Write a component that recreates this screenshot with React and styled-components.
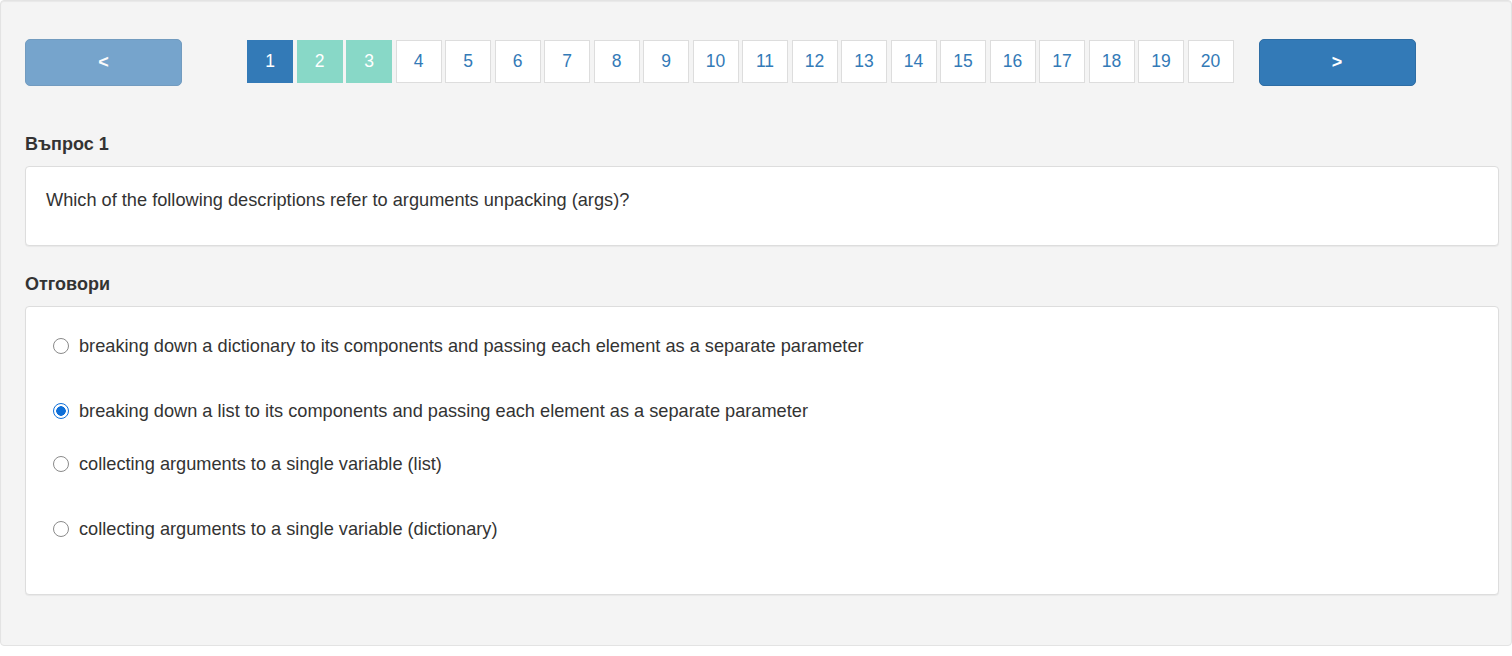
import React, { useState } from 'react';
import styled, { createGlobalStyle } from 'styled-components';

const GlobalStyle = createGlobalStyle`
  html, body {
    margin: 0;
    padding: 0;
    background: #fff;
  }
  body {
    font-family: 'Liberation Sans', Arial, sans-serif;
    color: #333;
  }
`;

const pages = Array.from({ length: 20 }, (_, i) => i + 1);

const answers = [
  { text: 'breaking down a dictionary to its components and passing each element as a separate parameter', space: 29 },
  { text: 'breaking down a list to its components and passing each element as a separate parameter', space: 45 },
  { text: 'collecting arguments to a single variable (list)', space: 33 },
  { text: 'collecting arguments to a single variable (dictionary)', space: 45 },
];

const App = () => {
  const [selected, setSelected] = useState(1);
  const current = 1;
  const visited = [2, 3];

  return (
    <>
      <GlobalStyle />
      <Well>
        <NavRow>
          <NavButton disabled>&lt;</NavButton>
          <Pager>
            {pages.map((p) => (
              <PageBox
                key={p}
                $state={p === current ? 'active' : visited.includes(p) ? 'visited' : 'default'}
              >
                {p}
              </PageBox>
            ))}
          </Pager>
          <NavButton>&gt;</NavButton>
        </NavRow>

        <Heading $top={48}>Въпрос 1</Heading>
        <QuestionCard>
          Which of the following descriptions refer to arguments unpacking (args)?
        </QuestionCard>

        <Heading $top={28}>Отговори</Heading>
        <AnswerCard>
          {answers.map((a, i) => (
            <Option key={i} $space={a.space}>
              <Radio
                type="radio"
                name="answer"
                checked={selected === i}
                onChange={() => setSelected(i)}
              />
              <span>{a.text}</span>
            </Option>
          ))}
        </AnswerCard>
      </Well>
    </>
  );
};

const Well = styled.div`
  box-sizing: border-box;
  width: 1512px;
  height: 646px;
  padding: 38px 12px 0 24px;
  background: #f4f4f4;
  border: 1px solid #e3e3e3;
  border-radius: 4px;
  box-shadow: inset 0 1px 1px rgba(0, 0, 0, 0.05);
`;

const NavRow = styled.div`
  display: flex;
  align-items: flex-start;
`;

const NavButton = styled.button`
  width: 157px;
  height: 47px;
  border: 1px solid #2e6da4;
  border-radius: 5px;
  background: #337ab7;
  color: #fff;
  font-family: 'Liberation Sans', Arial, sans-serif;
  font-size: 18px;
  font-weight: bold;
  cursor: pointer;
  &:disabled {
    opacity: 0.65;
    cursor: not-allowed;
  }
`;

const Pager = styled.div`
  display: flex;
  gap: 3.5px;
  margin: 1px 25px 0 65px;
`;

const pageColors = {
  active: { bg: '#337ab7', fg: '#fff', border: '#337ab7' },
  visited: { bg: '#88d8c7', fg: '#fff', border: '#88d8c7' },
  default: { bg: '#fff', fg: '#337ab7', border: '#dddddd' },
};

const PageBox = styled.div`
  box-sizing: border-box;
  width: 46px;
  height: 43px;
  display: flex;
  align-items: center;
  justify-content: center;
  font-size: 17.5px;
  background: ${(p) => pageColors[p.$state].bg};
  color: ${(p) => pageColors[p.$state].fg};
  border: 1px solid ${(p) => pageColors[p.$state].border};
  cursor: pointer;
`;

const Heading = styled.div`
  margin: ${(p) => p.$top}px 0 12px;
  font-size: 18px;
  line-height: 20px;
  font-weight: bold;
  color: #333;
`;

const Card = styled.div`
  box-sizing: border-box;
  background: #fff;
  border: 1px solid #dddddd;
  border-radius: 4px;
  box-shadow: 0 1px 1px rgba(0, 0, 0, 0.05);
`;

const QuestionCard = styled(Card)`
  height: 80px;
  padding: 23px 20px 0;
  font-size: 18.2px;
  line-height: 20px;
`;

const AnswerCard = styled(Card)`
  height: 289px;
  margin-top: 11px;
  padding: 0 27px;
`;

const Option = styled.label`
  display: flex;
  align-items: center;
  gap: 10px;
  margin-top: ${(p) => p.$space}px;
  font-size: 18.2px;
  line-height: 20px;
  cursor: pointer;
`;

const Radio = styled.input`
  appearance: none;
  box-sizing: border-box;
  width: 16px;
  height: 16px;
  margin: 0;
  border: 1.5px solid #8a8a8a;
  border-radius: 50%;
  background: #fff;
  flex-shrink: 0;
  &:checked {
    border: 1.5px solid #0f6fd8;
    background: radial-gradient(circle, #0f6fd8 0 4.5px, #fff 5px);
  }
`;

export default App;
